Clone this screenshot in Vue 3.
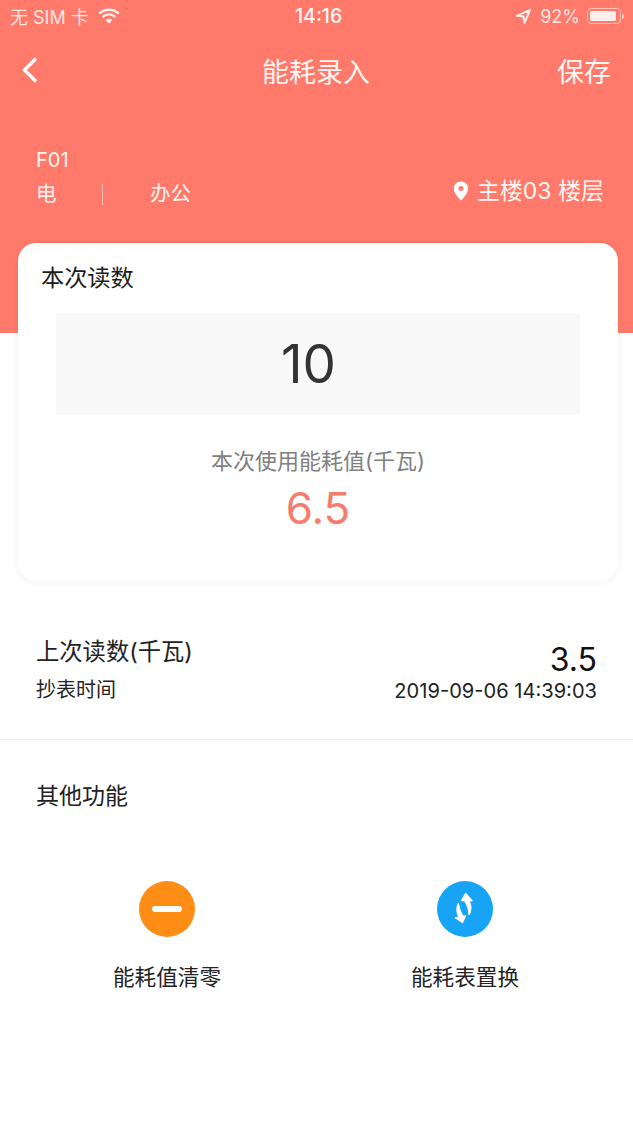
<template>
  <div class="page">
    <header class="header">
      <!-- status bar -->
      <div class="status">
        <div class="status-side">
          <span>无 SIM 卡</span>
          <svg class="wifi" width="22" height="16" viewBox="0 0 22 16">
            <path d="M1.200 5.600C6.800 0.600 15.200 0.600 20.800 5.600" fill="none" stroke="#fff" stroke-width="2.500" />
            <path d="M4.600 9C8.400 5.800 13.600 5.800 17.400 9" fill="none" stroke="#fff" stroke-width="2.500" />
            <path d="M7.600 12C9.600 10.400 12.400 10.400 14.400 12L11 15.800Z" fill="#fff" />
          </svg>
        </div>
        <div class="status-time">14:16</div>
        <div class="status-side status-right">
          <svg width="15" height="15" viewBox="0 0 15 15">
            <path d="M14 1L1 6.800L7.400 7.600L8.400 14Z" fill="none" stroke="#fff" stroke-width="2" stroke-linejoin="round" />
          </svg>
          <span class="battery-text">92%</span>
          <div class="battery"><div class="battery-fill"></div></div>
          <div class="battery-cap"></div>
        </div>
      </div>

      <!-- nav -->
      <div class="nav">
        <svg class="back" width="18" height="28" viewBox="0 0 18 28">
          <path d="M15 2.500L3.500 14L15 25.500" fill="none" stroke="#fff" stroke-width="3.400" />
        </svg>
        <div class="nav-title">能耗录入</div>
        <div class="nav-save">保存</div>
      </div>

      <!-- meter info -->
      <div class="info">
        <div>
          <div class="code">{{ meter.code }}</div>
          <div class="tags">
            <span class="tag-first">{{ meter.type }}</span>
            <span class="tag-line"></span>
            <span>{{ meter.usage }}</span>
          </div>
        </div>
        <div class="place">
          <svg width="16" height="20" viewBox="0 0 16 20">
            <path fill-rule="evenodd" fill="#fff" d="M8 0.500C3.800 0.500 0.800 3.600 0.800 7.500C0.800 12 5.500 17 8 19.500C10.500 17 15.200 12 15.200 7.500C15.200 3.600 12.200 0.500 8 0.500ZM8 5C9.500 5 10.600 6.100 10.600 7.500C10.600 8.900 9.500 10 8 10C6.500 10 5.400 8.900 5.400 7.500C5.400 6.100 6.500 5 8 5Z" />
          </svg>
          <span>{{ meter.place }}</span>
        </div>
      </div>
    </header>

    <section class="card">
      <div class="card-title">本次读数</div>
      <div class="reading">10</div>
      <div class="used-label">本次使用能耗值(千瓦)</div>
      <div class="used-value">6.5</div>
    </section>

    <section class="last">
      <div>
        <div class="last-title">上次读数(千瓦)</div>
        <div class="last-sub">抄表时间</div>
      </div>
      <div class="last-right">
        <div class="last-value">3.5</div>
        <div class="last-date">2019-09-06 14:39:03</div>
      </div>
    </section>

    <section class="other">
      <div class="other-title">其他功能</div>
      <div class="actions">
        <div class="action">
          <div class="circle orange"><span class="minus"></span></div>
          <div class="action-name">能耗值清零</div>
        </div>
        <div class="action">
          <div class="circle blue">
            <svg width="42" height="42" viewBox="0 0 42 42">
              <path d="M21.700 5.500L28 12.700L25 13C27.500 18 27.800 22 25 26.500C25 21.500 23.500 17 20.500 12.300L17.500 12.500Z" fill="#fff" stroke="#fff" stroke-width="1.300" stroke-linejoin="round" />
              <path d="M18.500 34.500L11.300 29.800L15 29C12.500 24 12 20 14.300 15.500C15 20 17 25 19 28.500L21.500 28Z" fill="#fff" stroke="#fff" stroke-width="1.300" stroke-linejoin="round" />
            </svg>
          </div>
          <div class="action-name">能耗表置换</div>
        </div>
      </div>
    </section>
  </div>
</template>

<script setup>
const meter = {
  code: 'F01',
  type: '电',
  usage: '办公',
  place: '主楼03 楼层'
}
</script>

<style>
html,
body {
  margin: 0;
  background: #fff;
}
</style>

<style scoped>
.page {
  width: 633px;
  min-height: 1125px;
  background: #fff;
  font-family: Inter, "Noto Sans CJK SC", sans-serif;
  color: #222;
  overflow: hidden;
}

.header {
  height: 333px;
  box-sizing: border-box;
  background: #ff7a6a;
  color: rgba(255, 255, 255, 0.95);
}

.status {
  display: flex;
  align-items: center;
  justify-content: space-between;
  height: 32px;
  padding: 0 9px 0 10px;
  font-size: 18px;
  position: relative;
}

.status-side {
  display: flex;
  align-items: center;
  gap: 9px;
  opacity: 0.88;
}

.status-time {
  position: absolute;
  left: 295px;
  font-size: 19.500px;
  font-weight: 500;
}

.status-right {
  gap: 0;
}

.battery-text {
  margin: 0 7px 0 9px;
  font-size: 18px;
}

.battery {
  width: 34px;
  height: 16px;
  box-sizing: border-box;
  border: 1px solid rgba(255, 255, 255, 0.6);
  border-radius: 4px;
  padding: 2px;
}

.battery-fill {
  height: 100%;
  width: 92%;
  background: #fff;
  border-radius: 2px;
}

.battery-cap {
  width: 2px;
  height: 5px;
  margin-left: 1px;
  background: rgba(255, 255, 255, 0.6);
  border-radius: 0 2px 2px 0;
}

.nav {
  display: flex;
  align-items: center;
  justify-content: space-between;
  height: 76px;
  padding: 0 22px 0 21px;
  font-size: 27px;
  position: relative;
}

.back {
  display: block;
}

.nav-title {
  position: absolute;
  left: 262px;
}

.info {
  display: flex;
  justify-content: space-between;
  align-items: flex-end;
  padding: 39px 29px 0 36px;
}

.code {
  font-size: 20px;
  line-height: 26px;
}

.tags {
  display: flex;
  align-items: center;
  margin-top: 6px;
  font-size: 20.500px;
  line-height: 30px;
}

.tag-first {
  width: 66px;
}

.tag-line {
  width: 1px;
  height: 21px;
  background: rgba(255, 255, 255, 0.5);
  margin-right: 47px;
}

.place {
  display: flex;
  align-items: center;
  gap: 8px;
  margin-bottom: 2px;
  font-size: 23px;
  line-height: 32px;
}

.card {
  box-sizing: border-box;
  width: 600px;
  height: 338px;
  margin: -90px 0 0 18px;
  padding: 20px 38px 0;
  background: #fff;
  border-radius: 18px;
  box-shadow: 0 1px 8px rgba(0, 0, 0, 0.06);
  text-align: center;
}

.card-title {
  margin-left: -15px;
  font-size: 23.200px;
  line-height: 30px;
  color: #1c1c1c;
  text-align: left;
}

.reading {
  height: 102px;
  margin-top: 20px;
  padding-right: 19px;
  background: #f9f9f9;
  font-size: 53px;
  line-height: 102px;
  color: #333;
}

.used-label {
  margin-top: 31px;
  font-size: 22px;
  line-height: 30px;
  color: #808080;
}

.used-value {
  margin-top: 7px;
  font-size: 44px;
  line-height: 50px;
  color: #f77c6e;
}

.last {
  display: flex;
  justify-content: space-between;
  height: 159px;
  box-sizing: border-box;
  padding: 55px 36px 0;
  border-bottom: 1px solid #eee;
}

.last-title {
  font-size: 23.300px;
  line-height: 32px;
}

.last-sub {
  margin-top: 8px;
  font-size: 20px;
  line-height: 28px;
}

.last-right {
  text-align: right;
}

.last-value {
  margin-top: 6px;
  font-size: 32px;
  line-height: 36px;
  color: #111;
}

.last-date {
  font-size: 20.100px;
  line-height: 27px;
}

.other {
  padding: 40px 36px 0;
}

.other-title {
  font-size: 23px;
  line-height: 32px;
}

.actions {
  display: flex;
  margin-top: 69px;
}

.action {
  display: flex;
  flex-direction: column;
  align-items: center;
  width: 130px;
}

.action + .action {
  margin-left: 168px;
}

.action:first-child {
  margin-left: 66px;
}

.circle {
  width: 56px;
  height: 56px;
  border-radius: 50%;
  display: flex;
  align-items: center;
  justify-content: center;
}

.orange {
  background: #fd8d14;
}

.blue {
  background: #17a4f5;
}

.minus {
  width: 30px;
  height: 6px;
  border-radius: 3px;
  background: #fff;
}

.action-name {
  margin-top: 24px;
  font-size: 21.600px;
  line-height: 32px;
  white-space: nowrap;
}
</style>
